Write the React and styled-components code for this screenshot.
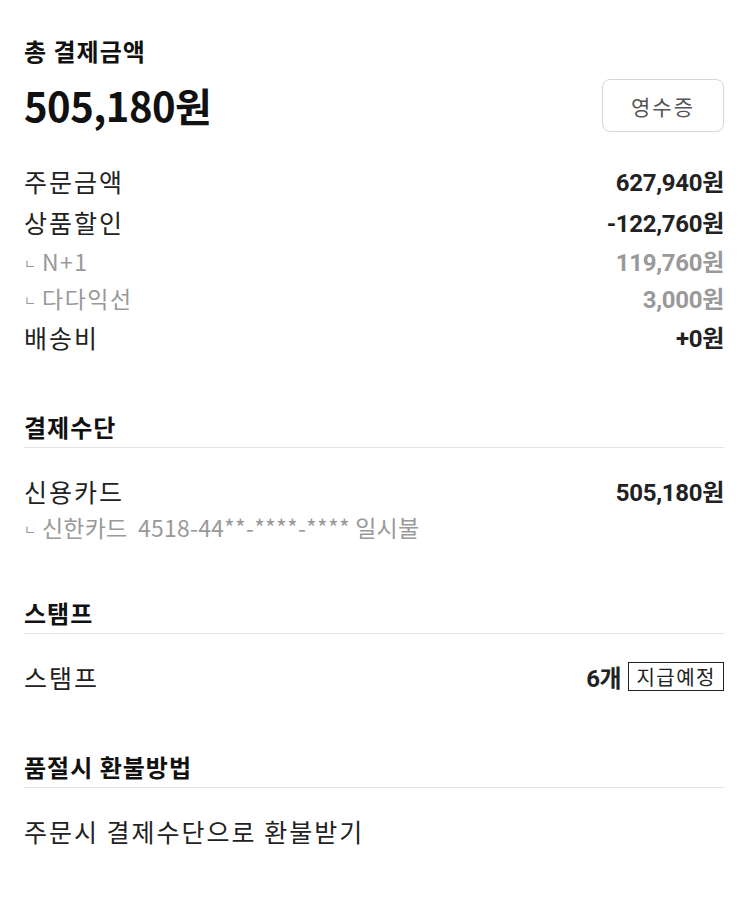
import styled, { createGlobalStyle } from "styled-components";

const GlobalStyle = createGlobalStyle`
	body {
		margin: 0;
		background: #fff;
		font-family: "Noto Sans CJK KR", sans-serif;
		color: #222;
	}
`;

const Page = styled.div`
	padding: 0 26px 40px 24px;
`;

const TotalLabel = styled.div`
	margin-top: 36px;
	font-size: 24px;
	font-weight: 700;
	line-height: 30px;
	letter-spacing: 1px;
	color: #111;
`;

const TotalRow = styled.div`
	display: flex;
	justify-content: space-between;
	align-items: center;
	margin-top: 13px;
`;

const TotalAmount = styled.div`
	font-size: 40px;
	font-weight: 700;
	line-height: 53px;
	color: #111;
	letter-spacing: -0.5px;
`;

const ReceiptButton = styled.button`
	width: 122px;
	height: 53px;
	border: 1px solid #d6d6d6;
	border-radius: 8px;
	background: #fff;
	font-family: "Noto Sans CJK KR", sans-serif;
	font-size: 21px;
	letter-spacing: 2px;
	color: #555;
	cursor: pointer;
`;

const Rows = styled.div`
	margin-top: 28px;
`;

const Row = styled.div`
	display: flex;
	justify-content: space-between;
	align-items: center;
	height: ${(p) => p.h || 41}px;
`;

const Label = styled.span`
	font-size: ${(p) => (p.sub ? 23 : 25)}px;
	color: ${(p) => (p.sub ? "#999" : "#222")};
	letter-spacing: ${(p) => p.ls ?? (p.sub ? 1.5 : 2)}px;
`;

const Corner = styled.span`
	font-size: 13px;
	margin-right: 6px;
	letter-spacing: 0;
	vertical-align: 3px;
`;

const Value = styled.span`
	font-family: Roboto, "Noto Sans CJK KR", sans-serif;
	font-size: 24px;
	font-weight: 700;
	letter-spacing: -0.3px;
	color: ${(p) => (p.sub ? "#999" : "#222")};
`;

const Section = styled.section`
	margin-top: 55px;
`;

const SectionTitle = styled.h3`
	margin: 0;
	font-size: 24px;
	font-weight: 700;
	line-height: 30px;
	letter-spacing: 1px;
	padding-bottom: 5px;
	border-bottom: 1px solid #e4e4e4;
	color: #111;
`;

const SectionBody = styled.div`
	padding-top: 22px;
`;

const ValueGroup = styled.div`
	display: flex;
	align-items: center;
	gap: 7px;
`;

const Badge = styled.span`
	display: inline-flex;
	align-items: center;
	justify-content: center;
	box-sizing: border-box;
	height: 29px;
	padding: 0 7px;
	border: 1.5px solid #222;
	font-size: 20px;
	color: #222;
	letter-spacing: 1.5px;
`;

const SubLabel = ({ children, ls }) => (
	<Label sub ls={ls}>
		<Corner>ㄴ</Corner>
		{children}
	</Label>
);

export default function App() {
	return (
		<>
			<GlobalStyle />
			<Page>
				<TotalLabel>총 결제금액</TotalLabel>
				<TotalRow>
					<TotalAmount>505,180원</TotalAmount>
					<ReceiptButton>영수증</ReceiptButton>
				</TotalRow>

				<Rows>
					<Row>
						<Label>주문금액</Label>
						<Value>627,940원</Value>
					</Row>
					<Row>
						<Label>상품할인</Label>
						<Value>-122,760원</Value>
					</Row>
					<Row h={37}>
						<SubLabel>N+1</SubLabel>
						<Value sub>119,760원</Value>
					</Row>
					<Row h={37}>
						<SubLabel>다다익선</SubLabel>
						<Value sub>3,000원</Value>
					</Row>
					<Row>
						<Label>배송비</Label>
						<Value>+0원</Value>
					</Row>
				</Rows>

				<Section>
					<SectionTitle>결제수단</SectionTitle>
					<SectionBody>
						<Row>
							<Label>신용카드</Label>
							<Value>505,180원</Value>
						</Row>
						<Row h={32}>
							<SubLabel ls={0.2}>신한카드&nbsp;&nbsp;4518-44**-****-**** 일시불</SubLabel>
						</Row>
					</SectionBody>
				</Section>

				<Section>
					<SectionTitle>스탬프</SectionTitle>
					<SectionBody>
						<Row>
							<Label>스탬프</Label>
							<ValueGroup>
								<Value>6개</Value>
								<Badge>지급예정</Badge>
							</ValueGroup>
						</Row>
					</SectionBody>
				</Section>

				<Section>
					<SectionTitle>품절시 환불방법</SectionTitle>
					<SectionBody>
						<Row>
							<Label>주문시 결제수단으로 환불받기</Label>
						</Row>
					</SectionBody>
				</Section>
			</Page>
		</>
	);
}
